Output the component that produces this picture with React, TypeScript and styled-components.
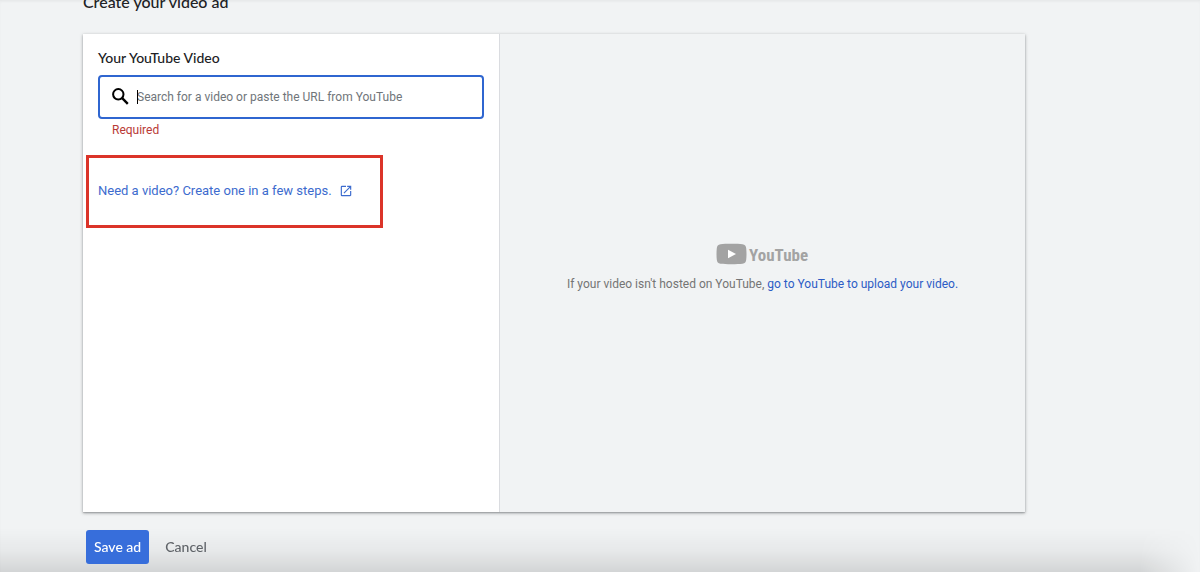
import React from "react";
import styled, { createGlobalStyle } from "styled-components";

const GlobalStyle = createGlobalStyle`
  * { box-sizing: border-box; }
  body {
    margin: 0;
    background: #f1f3f4;
    color: #202124;
    font-family: Roboto, "Liberation Sans", sans-serif;
    font-size: 12px;
  }
`;

const headingFont = `Lato, "Open Sans", sans-serif`;

const Page = styled.main`
  position: relative;
  min-height: 100vh;
  padding: 0 175px 0 83px;
  overflow: hidden;
  box-shadow: inset 0 2px 3px -1px rgba(60, 64, 67, 0.08);
`;

const Title = styled.h1`
  margin: -9px 0 21px;
  font-family: ${headingFont};
  font-size: 16px;
  font-weight: 500;
  line-height: 22px;
`;

const Card = styled.section`
  display: flex;
  min-height: 478px;
  background: #f1f3f4;
  box-shadow: 0 1px 3px rgba(60, 64, 67, 0.5), 0 1px 1px rgba(60, 64, 67, 0.15);
`;

const FormPane = styled.div`
  flex: 0 0 417px;
  padding: 14px 15px;
  background: #fff;
  border-right: 1px solid #dadce0;
`;

const Label = styled.label`
  display: block;
  margin-bottom: 7px;
  font-family: ${headingFont};
  font-size: 14px;
  font-weight: 500;
  line-height: 20px;
`;

const SearchBox = styled.div`
  display: flex;
  align-items: center;
  height: 44px;
  padding: 0 11px;
  border: 2px solid #2f66d0;
  border-radius: 4px;
`;

const Field = styled.div`
  position: relative;
  flex: 1;
  margin-left: 6px;
`;

const SearchInput = styled.input`
  width: 100%;
  padding: 0;
  border: 0;
  outline: 0;
  background: transparent;
  color: #202124;
  font: 12px/20px Roboto, sans-serif;
  &::placeholder { color: #70757a; opacity: 1; }
`;

const Caret = styled.span`
  position: absolute;
  top: 3px;
  left: 0;
  width: 1px;
  height: 14px;
  background: #000;
`;

const ErrorText = styled.p`
  margin: 4px 0 18px 14px;
  color: #b93a36;
  font-size: 12px;
  line-height: 14px;
`;

const Callout = styled.div`
  display: flex;
  align-items: center;
  width: 297px;
  height: 73px;
  margin-left: -12px;
  padding: 0 9px 2px;
  border: 3px solid #db3429;
`;

const Link = styled.a`
  color: #3c6bce;
  text-decoration: none;
`;

const CreateLink = styled(Link)`
  display: flex;
  align-items: center;
  gap: 7px;
  font-size: 13px;
  line-height: 18px;
`;

const PreviewPane = styled.div`
  flex: 1;
  display: flex;
  flex-direction: column;
  align-items: center;
  justify-content: center;
  padding-bottom: 12px;
`;

const Hint = styled.p`
  margin: 9px 0 0;
  color: #757575;
  font-size: 12px;
  line-height: 18px;
`;

const HintLink = styled(Link)`
  color: #2c5cc5;
`;

const Actions = styled.div`
  position: relative;
  z-index: 1;
  display: flex;
  gap: 8px;
  padding: 18px 0 8px 3px;
`;

const Button = styled.button<{ $primary?: boolean }>`
  height: 34px;
  padding: 0 8px 2px;
  border: 0;
  border-radius: 3px;
  background: ${(p) => (p.$primary ? "#376edb" : "transparent")};
  color: ${(p) => (p.$primary ? "#fff" : "#5f6368")};
  font-family: ${headingFont};
  font-size: 14px;
  font-weight: 500;
`;

const BottomShade = styled.div`
  position: fixed;
  right: 0;
  bottom: 0;
  left: 0;
  height: 44px;
  background: linear-gradient(to bottom, rgba(0, 0, 0, 0), rgba(0, 0, 0, 0.04) 50%, rgba(0, 0, 0, 0.12));
  mask-image: linear-gradient(to left, transparent, #000 60px);
  pointer-events: none;
`;

const SearchIcon = () => (
  <svg width="20" height="20" viewBox="0 0 20 20" fill="none" stroke="#000" strokeWidth="2" aria-hidden="true">
    <circle cx="7.3" cy="7.3" r="5.2" />
    <path d="M11.200 11.200 16.800 16.800" strokeWidth="2.4" />
  </svg>
);

const OpenIcon = () => (
  <svg width="14" height="14" viewBox="0 0 24 24" fill="#3c6bce" aria-hidden="true">
    <path d="M19 19H5V5h7V3H5a2 2 0 0 0-2 2v14a2 2 0 0 0 2 2h14c1.1 0 2-.9 2-2v-7h-2v7zM14 3v2h3.59l-9.83 9.83 1.41 1.41L19 6.41V10h2V3h-7z" />
  </svg>
);

const YouTubeLogo = () => (
  <svg width="94" height="24" viewBox="0 0 94 24" role="img" aria-label="YouTube">
    <path
      fill="#a3a3a3"
      d="M4.5 2.2C9 1.6 22 1.6 26.500 2.200C29 2.600 30 4 30.200 6.200C30.600 10 30.600 14 30.200 17.800C30 20 29 21.400 26.500 21.800C22 22.400 9 22.400 4.500 21.800C2 21.400 1 20 .8 17.800C.4 14 .4 10 .8 6.200C1 4 2 2.600 4.500 2.200Z"
    />
    <path fill="#fff" d="M12 7.700v8.600l8-4.300z" />
    <text x="33" y="19" fill="#a3a3a3" fontFamily='"Liberation Sans Narrow", "Roboto Condensed", sans-serif' fontSize="17" fontWeight="700">
      YouTube
    </text>
  </svg>
);

export default function App() {
  return (
    <>
      <GlobalStyle />
      <Page>
        <Title>Create your video ad</Title>
        <Card>
          <FormPane>
            <Label htmlFor="video">Your YouTube Video</Label>
            <SearchBox>
              <SearchIcon />
              <Field>
                <SearchInput
                  id="video"
                  type="text"
                  placeholder="Search for a video or paste the URL from YouTube"
                  aria-describedby="video-error"
                />
                <Caret />
              </Field>
            </SearchBox>
            <ErrorText id="video-error">Required</ErrorText>
            <Callout>
              <CreateLink href="#create">
                Need a video? Create one in a few steps.
                <OpenIcon />
              </CreateLink>
            </Callout>
          </FormPane>
          <PreviewPane>
            <YouTubeLogo />
            <Hint>
              If your video isn't hosted on YouTube, <HintLink href="#upload">go to YouTube to upload your video.</HintLink>
            </Hint>
          </PreviewPane>
        </Card>
        <Actions>
          <Button type="button" $primary>Save ad</Button>
          <Button type="button">Cancel</Button>
        </Actions>
        <BottomShade />
      </Page>
    </>
  );
}
